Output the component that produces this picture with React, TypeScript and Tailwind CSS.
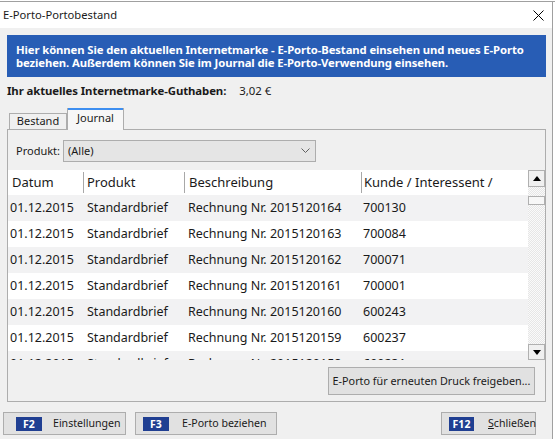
import React from 'react';

const rows = [
  { datum: '01.12.2015', produkt: 'Standardbrief', text: 'Rechnung Nr. 2015120164', kunde: '700130' },
  { datum: '01.12.2015', produkt: 'Standardbrief', text: 'Rechnung Nr. 2015120163', kunde: '700084' },
  { datum: '01.12.2015', produkt: 'Standardbrief', text: 'Rechnung Nr. 2015120162', kunde: '700071' },
  { datum: '01.12.2015', produkt: 'Standardbrief', text: 'Rechnung Nr. 2015120161', kunde: '700001' },
  { datum: '01.12.2015', produkt: 'Standardbrief', text: 'Rechnung Nr. 2015120160', kunde: '600243' },
  { datum: '01.12.2015', produkt: 'Standardbrief', text: 'Rechnung Nr. 2015120159', kunde: '600237' },
  { datum: '01.12.2015', produkt: 'Standardbrief', text: 'Rechnung Nr. 2015120158', kunde: '600231' },
];

const FKey: React.FC<{ k: string; w: string }> = ({ k, w }) => (
  <span className={`${w} h-[14px] bg-[#203f92] text-white font-bold text-[10.5px] leading-[14px] flex items-center justify-center shrink-0`}>
    {k}
  </span>
);

const Arrow: React.FC<{ up?: boolean }> = ({ up }) => (
  <svg width="8" height="5" viewBox="0 0 8 5">
    {up ? <polygon points="0,5 8,5 4,0" fill="#000" /> : <polygon points="0,0 8,0 4,5" fill="#000" />}
  </svg>
);

const App: React.FC = () => {
  return (
    <div className="w-[555px] h-[439px] bg-white overflow-hidden font-['Noto_Sans',sans-serif] text-[#1a1a1a]">
      <div className="h-[2px] border-b border-[#a0a0a0]" />
      <div className="w-[553px] h-[437px] border-r border-[#a0a0a0] flex flex-col">
        {/* title bar */}
        <div className="h-[26px] bg-white flex items-center justify-between shrink-0">
          <span className="pl-[3px] text-[11.2px] leading-none">E-Porto-Portobestand</span>
          <svg width="11" height="11" viewBox="0 0 11 11" className="mr-[8px]">
            <path d="M0.5 0.5 L10.5 10.5 M10.5 0.5 L0.5 10.5" stroke="#000" strokeWidth="1" />
          </svg>
        </div>

        <div className="flex-1 bg-[#f0f0f0] flex flex-col">
          <div className="pl-[7px] pr-[6px] pt-[7px]">
            {/* info banner */}
            <div className="h-[42px] bg-[#285db5] px-[9px] flex flex-col justify-center text-white font-bold text-[11.3px] leading-[13px] tracking-[-0.1px] whitespace-nowrap overflow-hidden">
              <span>Hier können Sie den aktuellen Internetmarke - E-Porto-Bestand einsehen und neues E-Porto</span>
              <span>beziehen. Außerdem können Sie im Journal die E-Porto-Verwendung einsehen.</span>
            </div>

            {/* balance */}
            <div className="h-[16px] mt-[6px] flex items-center text-[11.4px]">
              <span className="font-bold tracking-[-0.1px]">Ihr aktuelles Internetmarke-Guthaben:</span>
              <span className="ml-[13px] font-normal">3,02 €</span>
            </div>

            {/* tabs */}
            <div className="mt-[8px] h-[22px] flex items-end pl-[2px]">
              <div className="h-[16px] w-[58px] border border-b-0 border-[#adadad] bg-[#f0f0f0] text-[11px] flex items-center justify-center">
                Bestand
              </div>
              <div className="h-[22px] w-[57px] border-x border-[#adadad] bg-[#f7f7f7] relative -mb-px z-10 flex flex-col">
                <div className="h-[2px] bg-[#3d8ef0]" />
                <div className="flex-1 flex items-center justify-center text-[11px] pb-[4px]">Journal</div>
              </div>
            </div>

            {/* panel */}
            <div className="h-[273px] border border-[#adadad] bg-[#f0f0f0] flex flex-col">
              <div className="mt-[10px] h-[22px] flex items-center">
                <span className="pl-[8px] w-[55px] text-[11px]">Produkt:</span>
                <div className="w-[253px] h-[22px] bg-[#e5e5e5] border border-[#adadad] flex items-center justify-between px-[4px]">
                  <span className="text-[11px]">(Alle)</span>
                  <svg width="9" height="6" viewBox="0 0 9 6" className="mr-[1px]">
                    <path d="M0.5 0.5 L4.5 4.5 L8.5 0.5" stroke="#606060" strokeWidth="1" fill="none" />
                  </svg>
                </div>
              </div>

              {/* table */}
              <div className="mt-[8px] h-[190px] flex overflow-hidden">
                <div className="w-[521px] flex flex-col overflow-hidden">
                  <div className="h-[25px] bg-white flex items-center text-[13px] shrink-0">
                    <div className="w-[75px] pl-[4px]">Datum</div>
                    <div className="w-[101px] flex items-center">
                      <span className="w-px h-[21px] bg-[#a8a8a8]" />
                      <span className="pl-[3px]">Produkt</span>
                    </div>
                    <div className="w-[177px] flex items-center">
                      <span className="w-px h-[21px] bg-[#a8a8a8]" />
                      <span className="pl-[4px]">Beschreibung</span>
                    </div>
                    <div className="flex-1 flex items-center">
                      <span className="w-px h-[21px] bg-[#a8a8a8]" />
                      <span className="pl-[2px]">Kunde / Interessent /</span>
                    </div>
                  </div>
                  {rows.map((r, i) => (
                    <div
                      key={i}
                      className={`h-[26px] shrink-0 flex items-center text-[12.5px] ${i % 2 === 0 ? 'bg-[#f2f2f3]' : 'bg-white'}`}
                    >
                      <div className="w-[75px] pl-[2px]">{r.datum}</div>
                      <div className="w-[101px] pl-[4px]">{r.produkt}</div>
                      <div className="w-[177px] pl-[4px]">{r.text}</div>
                      <div className="flex-1 pl-[2px]">{r.kunde}</div>
                    </div>
                  ))}
                </div>
                {/* scrollbar */}
                <div className="w-[17px] flex flex-col bg-[repeating-conic-gradient(#e6e6e6_0_25%,#fafafa_0_50%)] bg-[length:2px_2px]">
                  <div className="h-[17px] bg-[#f0f0f0] border border-[#b0b0b0] flex items-center justify-center">
                    <Arrow up />
                  </div>
                  <div className="mt-[9px] h-[9px] bg-[#f7f7f7] border border-[#b0b0b0]" />
                  <div className="flex-1" />
                  <div className="h-[16px] bg-[#f0f0f0] border border-[#b0b0b0] flex items-center justify-center">
                    <Arrow />
                  </div>
                </div>
              </div>

              <div className="mt-[7px] flex justify-end pr-[10px]">
                <button className="w-[207px] h-[28px] bg-[#e1e1e1] border border-[#adadad] text-[10.8px] whitespace-nowrap">
                  E-Porto für erneuten Druck freigeben...
                </button>
              </div>
            </div>
          </div>

          {/* bottom buttons */}
          <div className="mt-[10px] pl-[3px] flex items-center text-[10.6px] whitespace-nowrap">
            <button className="w-[123px] h-[23px] bg-[#e1e1e1] border border-[#adadad] flex items-center pl-[12px]">
              <FKey k="F2" w="w-[26px]" />
              <span className="ml-[11px]">Einstellungen</span>
            </button>
            <button className="ml-[9px] w-[142px] h-[23px] bg-[#e1e1e1] border border-[#adadad] flex items-center pl-[7px]">
              <FKey k="F3" w="w-[26px]" />
              <span className="ml-[13px]">E-Porto beziehen</span>
            </button>
            <button className="ml-auto mr-[16px] w-[95px] h-[23px] bg-[#e1e1e1] border border-[#adadad] flex items-center pl-[7px]">
              <FKey k="F12" w="w-[25px]" />
              <span className="ml-[14px]">
                <span className="underline">S</span>chließen
              </span>
            </button>
          </div>
        </div>
      </div>
    </div>
  );
};

export default App;
